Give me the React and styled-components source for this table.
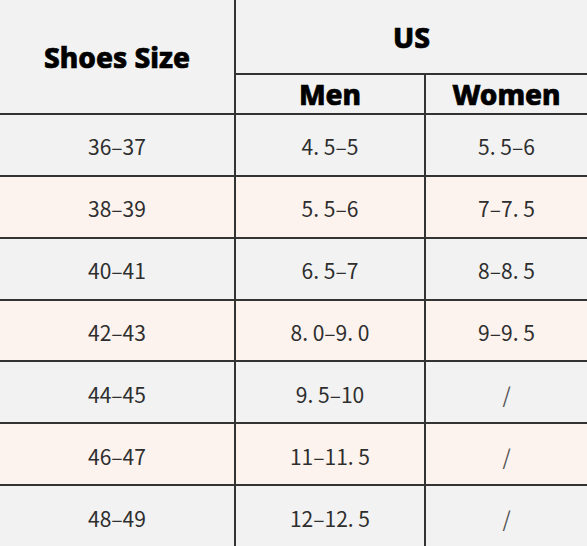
import React from 'react';
import styled, {createGlobalStyle} from 'styled-components';

const GlobalStyle = createGlobalStyle`
  html, body {
    margin: 0;
    padding: 0;
    background: #f2f2f2;
  }
`;

const rows = [
  ['36–37', '4. 5–5', '5. 5–6'],
  ['38–39', '5. 5–6', '7–7. 5'],
  ['40–41', '6. 5–7', '8–8. 5'],
  ['42–43', '8. 0–9. 0', '9–9. 5'],
  ['44–45', '9. 5–10', '/'],
  ['46–47', '11–11. 5', '/'],
  ['48–49', '12–12. 5', '/'],
];

function App() {
  return (
    <>
      <GlobalStyle />
      <SizeGrid>
        <HeadCell $col='1' $row='1 / span 2'>Shoes Size</HeadCell>
        <HeadCell $col='2 / span 2' $row='1'>US</HeadCell>
        <HeadCell $col='2' $row='2'>Men</HeadCell>
        <HeadCell $col='3' $row='2'>Women</HeadCell>
        {rows.map((row, i) =>
          row.map((value, j) => (
            <BodyCell key={`${i}-${j}`} $pink={i % 2 === 1} $muted={value === '/'}>
              {value}
            </BodyCell>
          )),
        )}
      </SizeGrid>
    </>
  );
}

export default App;

const SizeGrid = styled.div`
  display: grid;
  width: 587px;
  height: 546px;
  grid-template-columns: 234px 188px 1fr;
  grid-template-rows: 73px 38px repeat(7, 1fr);
  gap: 2px;
  background-color: #333;
  overflow: hidden;
`;

const HeadCell = styled.div`
  grid-column: ${(p) => p.$col};
  grid-row: ${(p) => p.$row};
  display: flex;
  align-items: center;
  justify-content: center;
  background-color: #f2f2f2;
  color: #000;
  font-family: 'Noto Sans', 'Open Sans', sans-serif;
  font-weight: 800;
  font-size: 28px;
  line-height: 1;
  -webkit-text-stroke: 0.7px #000;
`;

const BodyCell = styled.div`
  display: flex;
  align-items: center;
  justify-content: center;
  padding-top: 4px;
  background-color: ${(p) => (p.$pink ? '#fdf3ee' : '#f2f2f2')};
  color: ${(p) => (p.$muted ? '#555' : '#2e2e2e')};
  font-family: 'Noto Sans CJK SC', 'Noto Sans', sans-serif;
  font-size: 21px;
  line-height: 1;
`;
